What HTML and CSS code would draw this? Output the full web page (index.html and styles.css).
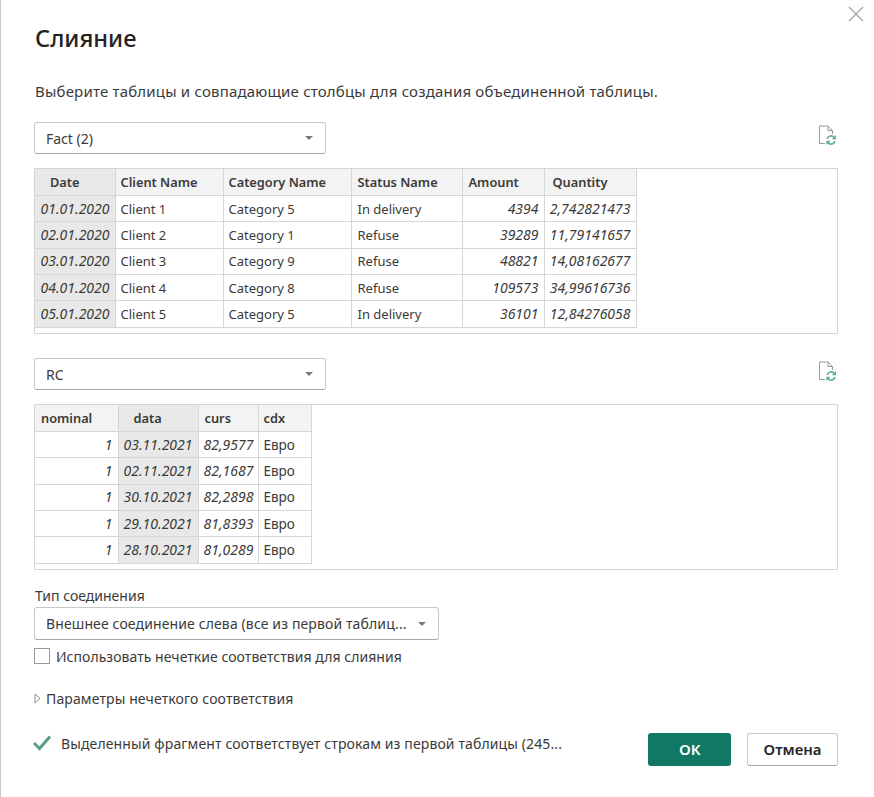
FILE: index.html
```html
<!DOCTYPE html>
<html lang="ru">
<head>
<meta charset="utf-8">
<title>Слияние</title>
<link rel="stylesheet" href="styles.css">
</head>
<body>
<div class="dialog">
  <svg class="close" width="16" height="16" viewBox="0 0 16 16"><path d="M1 1L15 15M15 1L1 15" stroke="#a6a6a6" stroke-width="1.3" fill="none"/></svg>
  <h1 class="title">Слияние</h1>
  <p class="desc">Выберите таблицы и совпадающие столбцы для создания объединенной таблицы.</p>

  <div class="picker-row">
    <div class="select select-table"><span class="select-text">Fact (2)</span><span class="caret"></span></div>
    <svg class="refresh" width="20" height="20" viewBox="0 0 20 20"><path d="M7 18.500H1.500V1H10L14.500 5.500V9M10 1V5.500H14.500" fill="none" stroke="#9a9a9a" stroke-width="1"/><path d="M9.200 14A4 4 0 0 1 16.300 12.500M17 16A4 4 0 0 1 9.900 17.500" fill="none" stroke="#5fb08f" stroke-width="1.700"/><path d="M18 10V14.300H13.800ZM8.300 20V15.700H12.500Z" fill="#5fb08f"/></svg>
  </div>
  <div class="preview">
    <table class="grid grid-a">
      <colgroup><col class="a1"><col class="a2"><col class="a3"><col class="a4"><col class="a5"><col class="a6"></colgroup>
      <thead><tr><th class="sel inset">Date</th><th>Client Name</th><th>Category Name</th><th class="pad-s">Status Name</th><th class="pad-s">Amount</th><th class="pad-q">Quantity</th></tr></thead>
      <tbody>
        <tr><td class="sel num">01.01.2020</td><td>Client 1</td><td>Category 5</td><td class="pad-s">In delivery</td><td class="num">4394</td><td class="num">2,742821473</td></tr>
        <tr><td class="sel num">02.01.2020</td><td>Client 2</td><td>Category 1</td><td class="pad-s">Refuse</td><td class="num">39289</td><td class="num">11,79141657</td></tr>
        <tr><td class="sel num">03.01.2020</td><td>Client 3</td><td>Category 9</td><td class="pad-s">Refuse</td><td class="num">48821</td><td class="num">14,08162677</td></tr>
        <tr><td class="sel num">04.01.2020</td><td>Client 4</td><td>Category 8</td><td class="pad-s">Refuse</td><td class="num">109573</td><td class="num">34,99616736</td></tr>
        <tr><td class="sel num">05.01.2020</td><td>Client 5</td><td>Category 5</td><td class="pad-s">In delivery</td><td class="num">36101</td><td class="num">12,84276058</td></tr>
      </tbody>
    </table>
  </div>

  <div class="picker-row second">
    <div class="select select-table"><span class="select-text">RC</span><span class="caret"></span></div>
    <svg class="refresh" width="20" height="20" viewBox="0 0 20 20"><path d="M7 18.500H1.500V1H10L14.500 5.500V9M10 1V5.500H14.500" fill="none" stroke="#9a9a9a" stroke-width="1"/><path d="M9.200 14A4 4 0 0 1 16.300 12.500M17 16A4 4 0 0 1 9.900 17.500" fill="none" stroke="#5fb08f" stroke-width="1.700"/><path d="M18 10V14.300H13.800ZM8.300 20V15.700H12.500Z" fill="#5fb08f"/></svg>
  </div>
  <div class="preview">
    <table class="grid grid-b">
      <colgroup><col class="b1"><col class="b2"><col class="b3"><col class="b4"></colgroup>
      <thead><tr><th class="pad-n">nominal</th><th class="sel inset">data</th><th class="pad-c">curs</th><th>cdx</th></tr></thead>
      <tbody>
        <tr><td class="num">1</td><td class="sel num">03.11.2021</td><td class="num">82,9577</td><td class="cyr">Евро</td></tr>
        <tr><td class="num">1</td><td class="sel num">02.11.2021</td><td class="num">82,1687</td><td class="cyr">Евро</td></tr>
        <tr><td class="num">1</td><td class="sel num">30.10.2021</td><td class="num">82,2898</td><td class="cyr">Евро</td></tr>
        <tr><td class="num">1</td><td class="sel num">29.10.2021</td><td class="num">81,8393</td><td class="cyr">Евро</td></tr>
        <tr><td class="num">1</td><td class="sel num">28.10.2021</td><td class="num">81,0289</td><td class="cyr">Евро</td></tr>
      </tbody>
    </table>
  </div>

  <div class="join-label">Тип соединения</div>
  <div class="select select-join"><span class="select-text wide">Внешнее соединение слева (все из первой таблиц...</span><span class="caret"></span></div>
  <label class="check-row"><span class="checkbox"></span><span>Использовать нечеткие соответствия для слияния</span></label>
  <div class="expander"><svg class="tri" width="7" height="11" viewBox="0 0 7 11"><path d="M1 1L6 5.500L1 10Z" fill="none" stroke="#8a8a8a" stroke-width="1"/></svg><span>Параметры нечеткого соответствия</span></div>

  <div class="footer">
    <svg class="tick" width="18" height="16" viewBox="0 0 18 16"><path d="M1 8L6.500 13.500L17 1.500" fill="none" stroke="#5b9e85" stroke-width="3"/></svg>
    <span class="status">Выделенный фрагмент соответствует строкам из первой таблицы (245...</span>
    <button class="btn btn-ok">OK</button>
    <button class="btn btn-cancel">Отмена</button>
  </div>
</div>
</body>
</html>
```
FILE: styles.css
```css
* { box-sizing: border-box; }
html, body { margin: 0; padding: 0; background: #fff; }
body { font-family: "Noto Sans", "Open Sans", sans-serif; color: #3b3a39; font-size: 14px; }
.dialog { position: relative; width: 874px; height: 797px; border-left: 1px solid #c8c8c8; padding: 22px 36px 0 33px; }
.close { position: absolute; left: 847px; top: 6px; }
.title { margin: 0; padding-left: 1px; font-size: 23.7px; line-height: 32px; font-weight: 500; color: #252423; }
.desc { margin: 27px 0 0; padding-left: 1px; font-size: 15px; line-height: 20px; color: #3b3a39; letter-spacing: .19px; }
.picker-row { display: flex; justify-content: space-between; align-items: flex-start; margin-top: 21px; height: 46px; }
.picker-row.second { margin-top: 24px; }
.select { display: flex; align-items: center; justify-content: space-between; background: #fff; border: 1px solid #c8c8c8; border-bottom-color: #a8a8a8; border-radius: 3px; padding: 0 12px 0 11px; }
.select-table { width: 292px; height: 32px; }
.select-join { width: 405px; height: 33px; margin-top: 1px; }
.select-text { font-size: 14px; color: #3b3a39; white-space: nowrap; }
.select-text.wide { letter-spacing: .12px; }
.caret { width: 0; height: 0; border-left: 4px solid transparent; border-right: 4px solid transparent; border-top: 4px solid #7a7a7a; }
.refresh { margin: 3px 0 0; }
.preview { width: 804px; height: 166px; border: 1px solid #d4d4d4; }
.grid { border-collapse: collapse; table-layout: fixed; font-size: 13px; line-height: 18px; color: #3b3a39; }
.grid th, .grid td { height: 26.35px; padding: 0 5px; border: 1px solid #d6d6d6; white-space: nowrap; overflow: hidden; }
.grid tr > :first-child { border-left: 0; }
.grid thead th { border-top: 0; background: #f3f3f3; text-align: left; font-weight: 600; font-size: 12.8px; }
.grid td.num { text-align: right; font-style: italic; font-size: 14px; }
.grid td.cyr { font-size: 13.5px; }
.grid .sel, .grid thead th.sel { background: #e8e8e8; }
.grid thead th.inset { padding-left: 15px; }
.grid thead th.pad-q { padding-left: 8px; }
.grid thead th.pad-n { padding-left: 6px; }
.grid thead th.pad-c { padding-left: 6px; }
.grid thead th.pad-s, .grid td.pad-s { padding-left: 6px; }
.grid-a { width: 601px; }
.grid-b { width: 276px; }
.a1 { width: 80px; } .a2 { width: 108px; } .a3 { width: 128px; } .a4 { width: 111px; } .a5 { width: 82px; } .a6 { width: 92px; }
.b1 { width: 83px; } .b2 { width: 80px; } .b3 { width: 60px; } .b4 { width: 53px; }
.join-label { margin-top: 16px; padding-left: 1px; font-size: 14px; line-height: 20px; }
.check-row { display: flex; align-items: center; gap: 6px; margin-top: 6px; height: 20px; letter-spacing: .04px; }
.checkbox { width: 16px; height: 16px; border: 1px solid #9a9a9a; background: #fff; }
.expander { display: flex; align-items: center; gap: 5px; margin-top: 22px; height: 20px; letter-spacing: .12px; }
.tri { flex: none; }
.footer { display: flex; align-items: flex-start; margin-top: 25px; }
.tick { margin: 2px 0 0 -1px; flex: none; }
.status { margin: 1px 0 0 10px; width: 588px; line-height: 20px; white-space: nowrap; letter-spacing: .12px; }
.btn { height: 33px; border-radius: 3px; font-family: inherit; font-size: 15px; font-weight: 600; padding: 0 0 1px; }
.btn-ok { width: 83px; background: #117865; border: 0; color: #fff; }
.btn-cancel { width: 91px; margin-left: 16px; background: #fff; border: 1px solid #c8c8c8; border-bottom-color: #a8a8a8; color: #252423; }
```
